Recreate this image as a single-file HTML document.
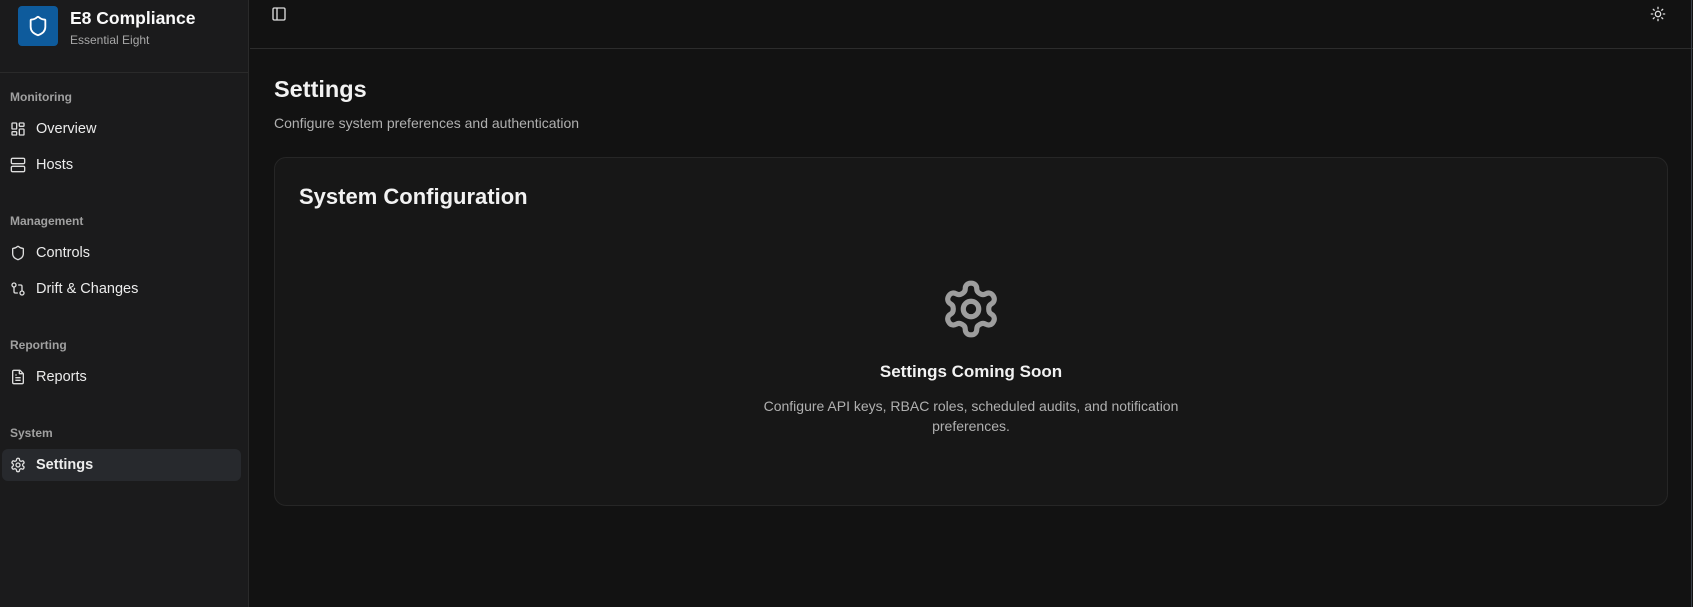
<!DOCTYPE html>
<html><head><meta charset="utf-8"><style>
*{box-sizing:border-box;margin:0;padding:0}
body{width:1693px;height:607px;overflow:hidden;background:#121212;font-family:"Liberation Sans",sans-serif;color:#f2f2f2;position:relative}
.sb{position:absolute;left:0;top:0;width:249px;height:607px;background:#1b1b1c;border-right:1px solid #2a2a2a}
.logo{position:absolute;left:18px;top:6px;width:40px;height:40px;background:#0e5b9c;border-radius:4px;display:flex;align-items:center;justify-content:center}
.bt{position:absolute;left:70px;top:8px;font-size:17.5px;font-weight:bold;color:#fafafa}
.bs{position:absolute;left:70px;top:33px;font-size:12px;color:#a8a8a8}
.sep{position:absolute;left:0;top:72px;width:249px;height:1px;background:#2a2a2a}
.lbl{position:absolute;left:10px;font-size:12px;font-weight:bold;color:#a0a0a0}
.it{position:absolute;left:10px;font-size:14.5px;color:#ececec;display:flex;align-items:center;gap:10px;height:20px}
.it svg{width:16px;height:16px;flex:none}
.act{position:absolute;left:2px;top:449px;width:239px;height:32px;background:#27292d;border-radius:6px}
.hdr{position:absolute;left:250px;top:0;right:0;height:49px;border-bottom:1px solid #2c2c2c}
.rline{position:absolute;right:1px;top:0;width:1px;height:607px;background:#3a3f47}
h1{position:absolute;left:274px;top:76px;font-size:23.5px;font-weight:bold}
.sub{position:absolute;left:274px;top:115px;font-size:14px;color:#b0b0b0}
.card{position:absolute;left:274px;top:157px;width:1394px;height:349px;background:#171717;border:1px solid #262626;border-radius:12px}
.ct{position:absolute;left:24px;top:26px;font-size:22px;font-weight:bold}
.cs{position:absolute;left:0;right:0;top:204px;text-align:center;font-size:17px;font-weight:bold}
.cd{position:absolute;left:0;right:0;top:238px;text-align:center;font-size:14px;line-height:20px;color:#b0b0b0}
</style></head><body>
<div class="sb">
 <div class="logo"><svg width="22" height="22" viewBox="0 0 24 24" fill="none" stroke="#fff" stroke-width="2" stroke-linecap="round" stroke-linejoin="round"><path d="M20 13c0 5-3.5 7.5-7.66 8.950a1 1 0 0 1-.67-.01C7.5 20.5 4 18 4 13V6a1 1 0 0 1 1-1c2 0 4.5-1.2 6.24-2.72a1.17 1.17 0 0 1 1.52 0C14.51 3.81 17 5 19 5a1 1 0 0 1 1 1z"/></svg></div>
 <div class="bt">E8 Compliance</div>
 <div class="bs">Essential Eight</div>
 <div class="sep"></div>
 <div class="lbl" style="top:90px">Monitoring</div>
 <div class="it" style="top:119px"><svg viewBox="0 0 24 24" fill="none" stroke="#ddd" stroke-width="2"><rect x="3" y="3" width="7" height="9" rx="1"/><rect x="14" y="3" width="7" height="5" rx="1"/><rect x="14" y="12" width="7" height="9" rx="1"/><rect x="3" y="16" width="7" height="5" rx="1"/></svg>Overview</div>
 <div class="it" style="top:155px"><svg viewBox="0 0 24 24" fill="none" stroke="#ddd" stroke-width="2"><rect x="2" y="2" width="20" height="8" rx="2"/><rect x="2" y="14" width="20" height="8" rx="2"/></svg>Hosts</div>
 <div class="lbl" style="top:214px">Management</div>
 <div class="it" style="top:243px"><svg viewBox="0 0 24 24" fill="none" stroke="#ddd" stroke-width="2" stroke-linejoin="round"><path d="M20 13c0 5-3.5 7.5-7.66 8.95a1 1 0 0 1-.67-.01C7.5 20.5 4 18 4 13V6a1 1 0 0 1 1-1c2 0 4.5-1.2 6.24-2.72a1.17 1.17 0 0 1 1.52 0C14.51 3.81 17 5 19 5a1 1 0 0 1 1 1z"/></svg>Controls</div>
 <div class="it" style="top:279px"><svg viewBox="0 0 24 24" fill="none" stroke="#ddd" stroke-width="2" stroke-linecap="round"><circle cx="18" cy="18" r="3"/><circle cx="6" cy="6" r="3"/><path d="M13 6h3a2 2 0 0 1 2 2v7M11 18H8a2 2 0 0 1-2-2V9"/></svg>Drift &amp; Changes</div>
 <div class="lbl" style="top:338px">Reporting</div>
 <div class="it" style="top:367px"><svg viewBox="0 0 24 24" fill="none" stroke="#ddd" stroke-width="2" stroke-linejoin="round"><path d="M15 2H6a2 2 0 0 0-2 2v16a2 2 0 0 0 2 2h12a2 2 0 0 0 2-2V7z"/><path d="M14 2v5h5M16 13H8M16 17H8M10 9H8"/></svg>Reports</div>
 <div class="lbl" style="top:426px">System</div>
 <div class="act"></div>
 <div class="it" style="top:455px;font-weight:bold"><svg viewBox="0 0 24 24" fill="none" stroke="#ddd" stroke-width="2"><path d="M12.22 2h-.44a2 2 0 0 0-2 2v.18a2 2 0 0 1-1 1.73l-.43.25a2 2 0 0 1-2 0l-.15-.08a2 2 0 0 0-2.73.73l-.22.38a2 2 0 0 0 .73 2.73l.15.1a2 2 0 0 1 1 1.72v.51a2 2 0 0 1-1 1.74l-.15.09a2 2 0 0 0-.73 2.73l.22.38a2 2 0 0 0 2.730.73l.15-.08a2 2 0 0 1 2 0l.43.25a2 2 0 0 1 1 1.73V20a2 2 0 0 0 2 2h.44a2 2 0 0 0 2-2v-.18a2 2 0 0 1 1-1.73l.43-.25a2 2 0 0 1 2 0l.15.08a2 2 0 0 0 2.73-.73l.22-.39a2 2 0 0 0-.73-2.73l-.15-.08a2 2 0 0 1-1-1.74v-.5a2 2 0 0 1 1-1.74l.15-.09a2 2 0 0 0 .73-2.73l-.22-.38a2 2 0 0 0-2.73-.73l-.15.08a2 2 0 0 1-2 0l-.43-.25a2 2 0 0 1-1-1.73V4a2 2 0 0 0-2-2z"/><circle cx="12" cy="12" r="3"/></svg>Settings</div>
</div>
<div class="hdr">
 <svg style="position:absolute;left:21px;top:6px" width="16" height="16" viewBox="0 0 24 24" fill="none" stroke="#ddd" stroke-width="2"><rect x="3" y="3" width="18" height="18" rx="2"/><path d="M9 3v18"/></svg>
 <svg style="position:absolute;left:1400px;top:6px" width="16" height="16" viewBox="0 0 24 24" fill="none" stroke="#ddd" stroke-width="2" stroke-linecap="round"><circle cx="12" cy="12" r="4"/><path d="M12 2v2M12 20v2M4.93 4.93l1.41 1.41M17.66 17.66l1.41 1.41M2 12h2M20 12h2M6.34 17.66l-1.41 1.41M19.07 4.93l-1.41 1.41"/></svg>
</div>
<div class="rline"></div>
<h1>Settings</h1>
<div class="sub">Configure system preferences and authentication</div>
<div class="card">
 <div class="ct">System Configuration</div>
 <svg style="position:absolute;left:665px;top:120px" width="62" height="62" viewBox="0 0 24 24" fill="none" stroke="#9e9e9e" stroke-width="2" stroke-linejoin="round"><path d="M12.22 2h-.44a2 2 0 0 0-2 2v.18a2 2 0 0 1-1 1.73l-.43.25a2 2 0 0 1-2 0l-.15-.08a2 2 0 0 0-2.73.73l-.22.38a2 2 0 0 0 .73 2.73l.15.1a2 2 0 0 1 1 1.72v.51a2 2 0 0 1-1 1.74l-.15.09a2 2 0 0 0-.73 2.73l.22.38a2 2 0 0 0 2.73.73l.15-.08a2 2 0 0 1 2 0l.43.25a2 2 0 0 1 1 1.73V20a2 2 0 0 0 2 2h.44a2 2 0 0 0 2-2v-.18a2 2 0 0 1 1-1.73l.43-.25a2 2 0 0 1 2 0l.15.08a2 2 0 0 0 2.73-.73l.22-.39a2 2 0 0 0-.73-2.73l-.15-.08a2 2 0 0 1-1-1.74v-.5a2 2 0 0 1 1-1.74l.15-.09a2 2 0 0 0 .73-2.73l-.22-.38a2 2 0 0 0-2.73-.73l-.15.08a2 2 0 0 1-2 0l-.43-.25a2 2 0 0 1-1-1.73V4a2 2 0 0 0-2-2z"/><circle cx="12" cy="12" r="3"/></svg>
 <div class="cs">Settings Coming Soon</div>
 <div class="cd">Configure API keys, RBAC roles, scheduled audits, and notification<br>preferences.</div>
</div>
</body></html>
